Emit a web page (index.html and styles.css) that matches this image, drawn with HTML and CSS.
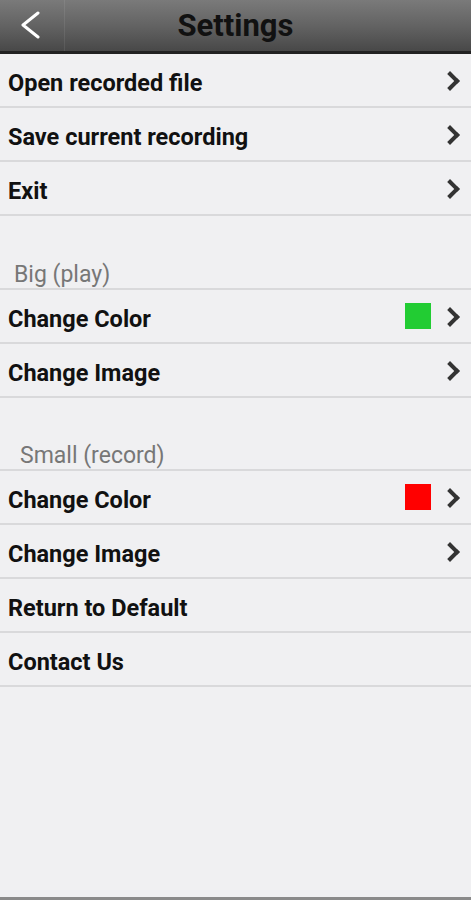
FILE: index.html
```html
<!DOCTYPE html>
<html lang="en">
<head>
    <meta charset="UTF-8">
    <meta name="viewport" content="width=device-width, initial-scale=1.0">
    <title>Settings</title>
    <link rel="stylesheet" href="styles.css">
</head>
<body>
    <div class="screen">
        <header class="topbar">
            <a class="back-btn" href="#">
                <svg width="24" height="30" viewBox="0 0 24 30">
                    <path d="M20 2 L5 14 L20 26" fill="none" stroke="#fff" stroke-width="3" stroke-linecap="round" stroke-linejoin="round"/>
                </svg>
            </a>
            <h1>Settings</h1>
        </header>

        <ul class="menu">
            <li class="menu-item">Open recorded file <span class="chevron"></span></li>
            <li class="menu-item">Save current recording <span class="chevron"></span></li>
            <li class="menu-item">Exit <span class="chevron"></span></li>
        </ul>

        <div class="section-title big">Big (play)</div>
        <ul class="menu">
            <li class="menu-item">Change Color <span class="swatch green"></span><span class="chevron"></span></li>
            <li class="menu-item">Change Image <span class="chevron"></span></li>
        </ul>

        <div class="section-title small">Small (record)</div>
        <ul class="menu">
            <li class="menu-item">Change Color <span class="swatch red"></span><span class="chevron"></span></li>
            <li class="menu-item">Change Image <span class="chevron"></span></li>
            <li class="menu-item">Return to Default</li>
            <li class="menu-item">Contact Us</li>
        </ul>
    </div>
</body>
</html>
```

FILE: styles.css
```css
* {
    margin: 0;
    padding: 0;
    box-sizing: border-box;
}

body {
    font-family: Roboto, 'Noto Sans', sans-serif;
    background: #f0f0f2;
    color: #111;
}

.screen {
    height: 900px;
    display: flex;
    flex-direction: column;
    border-bottom: 3px solid #8a8a8a;
}

.topbar {
    height: 54px;
    flex-shrink: 0;
    display: flex;
    align-items: center;
    background: linear-gradient(to bottom, #7a7a7a 0%, #636363 50%, #484848 100%);
    border-bottom: 3px solid #222;
    position: relative;
}

.back-btn {
    width: 65px;
    height: 100%;
    display: flex;
    align-items: center;
    padding-left: 18px;
    border-right: 1px solid rgba(255, 255, 255, 0.08);
}

.topbar h1 {
    position: absolute;
    left: 0;
    right: 0;
    text-align: center;
    font-size: 31px;
    font-weight: 700;
    color: #111;
    pointer-events: none;
}

.menu {
    list-style: none;
}

.menu-item {
    height: 54px;
    display: flex;
    align-items: center;
    padding: 5px 10px 0 8px;
    font-size: 23.5px;
    font-weight: 700;
    border-bottom: 2px solid #d9d9db;
}

.chevron {
    width: 14px;
    height: 14px;
    border-top: 4px solid #333;
    border-right: 4px solid #333;
    transform: rotate(45deg);
    margin: -4px 4px 0 auto;
}

.swatch {
    width: 26px;
    height: 26px;
    margin: -5px 12px 0 auto;
}

.swatch + .chevron {
    margin-left: 0;
}

.swatch.green {
    background: #22cc33;
}

.swatch.red {
    background: #ff0000;
}

.section-title {
    font-size: 23px;
    line-height: 27px;
    color: #777;
    margin-top: 43px;
    padding-top: 2px;
    border-bottom: 2px solid #d9d9db;
}

.section-title.big {
    padding-left: 14px;
}

.section-title.small {
    margin-top: 42px;
    padding-left: 20px;
}
```
